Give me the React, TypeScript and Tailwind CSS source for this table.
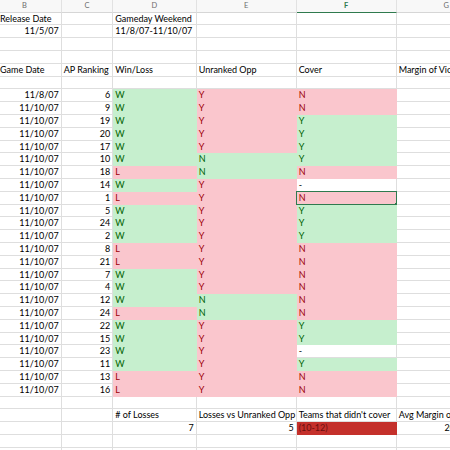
import React from "react";

type Fill = "none" | "good" | "bad" | "alert";

interface CellSpec {
  text?: string;
  align?: "left" | "right";
  fill?: Fill;
  selected?: boolean;
}

// column widths, B is cut off by the window on the left
const COLS = ["w-[61.7px]", "w-[51.6px]", "w-[83.4px]", "w-[100px]", "w-[100px]", "w-[100px]"];
const LETTERS = ["B", "C", "D", "E", "F", "G"];

const FILL_CLASSES: Record<Fill, string> = {
  none: "bg-white border-[#dedede] text-black",
  good: "bg-[#c6efce] border-[#c6efce] text-[#006100]",
  bad: "bg-[#fac6cd] border-[#fac6cd] text-[#9c0006]",
  alert: "bg-[#c4302b] border-[#c4302b] text-[#6a0f0f]",
};

type Game = [string, number, string, string, string];

const GAMES: Game[] = [
  ["11/8/07", 6, "W", "Y", "N"],
  ["11/10/07", 9, "W", "Y", "N"],
  ["11/10/07", 19, "W", "Y", "Y"],
  ["11/10/07", 20, "W", "Y", "Y"],
  ["11/10/07", 17, "W", "Y", "Y"],
  ["11/10/07", 10, "W", "N", "Y"],
  ["11/10/07", 18, "L", "N", "N"],
  ["11/10/07", 14, "W", "Y", "-"],
  ["11/10/07", 1, "L", "Y", "N"],
  ["11/10/07", 5, "W", "Y", "Y"],
  ["11/10/07", 24, "W", "Y", "Y"],
  ["11/10/07", 2, "W", "Y", "Y"],
  ["11/10/07", 8, "L", "Y", "N"],
  ["11/10/07", 21, "L", "Y", "N"],
  ["11/10/07", 7, "W", "Y", "N"],
  ["11/10/07", 4, "W", "Y", "N"],
  ["11/10/07", 12, "W", "N", "N"],
  ["11/10/07", 24, "L", "N", "N"],
  ["11/10/07", 22, "W", "Y", "Y"],
  ["11/10/07", 15, "W", "Y", "Y"],
  ["11/10/07", 23, "W", "Y", "-"],
  ["11/10/07", 11, "W", "Y", "Y"],
  ["11/10/07", 13, "L", "Y", "N"],
  ["11/10/07", 16, "L", "Y", "N"],
];

function gameRow(g: Game, i: number): CellSpec[] {
  const [date, rank, result, unranked, cover] = g;
  return [
    { text: date, align: "right" },
    { text: String(rank), align: "right" },
    { text: result, fill: result === "W" ? "good" : "bad" },
    { text: unranked, fill: unranked === "N" ? "good" : "bad" },
    {
      text: cover,
      fill: cover === "Y" ? "good" : cover === "N" ? "bad" : "none",
      selected: i === 8,
    },
    {},
  ];
}

const EMPTY: CellSpec[] = [{}, {}, {}, {}, {}, {}];

const ROWS: CellSpec[][] = [
  [{ text: "Release Date" }, {}, { text: "Gameday Weekend" }, {}, {}, {}],
  [{ text: "11/5/07", align: "right" }, {}, { text: "11/8/07-11/10/07" }, {}, {}, {}],
  EMPTY,
  EMPTY,
  [
    { text: "Game Date" },
    { text: "AP Ranking" },
    { text: "Win/Loss" },
    { text: "Unranked Opp" },
    { text: "Cover" },
    { text: "Margin of Victory" },
  ],
  EMPTY,
  ...GAMES.map(gameRow),
  EMPTY,
  [
    {},
    {},
    { text: "# of Losses" },
    { text: "Losses vs Unranked Opp" },
    { text: "Teams that didn't cover" },
    { text: "Avg Margin of Victory" },
  ],
  [
    {},
    {},
    { text: "7", align: "right" },
    { text: "5", align: "right" },
    { text: "(10-12)", fill: "alert" },
    { text: "20.2857143", align: "right" },
  ],
  EMPTY,
  EMPTY,
];

function Cell({ spec, col }: { spec: CellSpec; col: number }) {
  const fill = spec.fill ?? "none";
  return (
    <div
      className={`relative shrink-0 h-full border-r border-b px-[2px] whitespace-nowrap overflow-visible leading-[12.8px] ${COLS[col]} ${FILL_CLASSES[fill]} ${
        spec.align === "right" ? "text-right" : "text-left"
      } ${col === 0 && spec.align !== "right" ? "pl-0" : ""}`}
    >
      {spec.text}
      {spec.selected && (
        <div className="absolute -left-[1px] -top-[1px] -right-[1px] bottom-[-1px] border-[1.5px] border-[#2f7a4e]">
          <div className="absolute -right-[3px] -bottom-[3px] w-[4px] h-[4px] bg-[#2f7a4e]" />
        </div>
      )}
    </div>
  );
}

function ColumnHeader() {
  return (
    <div className="flex h-[12.7px] bg-[#f8f8f8] text-[7.5px] leading-[12px] text-[#6d6d6d]">
      {LETTERS.map((l, i) => (
        <div
          key={l}
          className={`shrink-0 h-full border-r border-[#e2e2e2] ${COLS[i]} ${
            i === 0 ? "text-left pl-[22px]" : "text-center"
          } ${
            l === "F"
              ? "border-b-[1.5px] border-b-[#2f7a4e] text-[#2f7a4e] font-bold"
              : "border-b border-b-[#d6d6d6]"
          }`}
        >
          {l}
        </div>
      ))}
    </div>
  );
}

export default function App() {
  return (
    <div className="w-[450px] h-[450px] overflow-hidden bg-white font-['Lato',sans-serif] text-[9px] text-black">
      <ColumnHeader />
      {ROWS.map((row, r) => (
        <div key={r} className="flex h-[12.8px]">
          {row.map((spec, c) => (
            <Cell key={c} spec={spec} col={c} />
          ))}
        </div>
      ))}
    </div>
  );
}
